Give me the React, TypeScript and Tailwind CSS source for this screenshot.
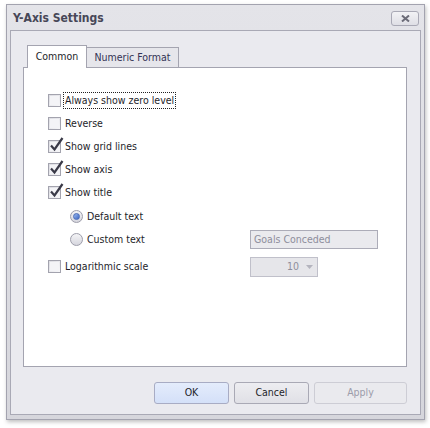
import { useState } from "react";

const font = { fontFamily: "'DejaVu Sans Condensed', 'Liberation Sans', Arial, sans-serif" };

function CheckBox({ checked, label, focused }: { checked?: boolean; label: string; focused?: boolean }) {
  return (
    <div className="flex items-center h-[23px]">
      <div className="relative w-[13px] h-[13px] border border-[#a3a3ae] bg-gradient-to-br from-[#dcdce2] to-[#f7f7f9] shrink-0">
        <div className="absolute inset-[1px] bg-[#f4f4f7]" />
        {checked && (
          <svg className="absolute -left-[1px] -top-[5px]" width="17" height="17" viewBox="0 0 17 17">
            <path d="M3 9.5 L6.5 13.5 L14.5 2" fill="none" stroke="#3a3a48" strokeWidth="2.2" />
          </svg>
        )}
      </div>
      <span
        className={`ml-[3px] px-[1px] text-[10.5px] text-[#1e1e2a] leading-[15px] ${focused ? "outline-1 outline-dotted outline-[#222]" : ""}`}
      >
        {label}
      </span>
    </div>
  );
}

function Radio({ checked, label }: { checked?: boolean; label: string }) {
  return (
    <div className="flex items-center h-[23px]">
      <div className="w-[13px] h-[13px] rounded-full border border-[#9d9daa] bg-gradient-to-b from-[#f4f4f6] to-[#d6d6de] flex items-center justify-center shrink-0">
        {checked && <div className="w-[7px] h-[7px] rounded-full bg-gradient-to-br from-[#9ab8ef] to-[#3e66c2] border border-[#4a6cb8]" />}
      </div>
      <span className="ml-[4px] text-[10.5px] text-[#1e1e2a]">{label}</span>
    </div>
  );
}

export default function App() {
  const [tab] = useState("common");
  void tab;
  return (
    <div className="w-[430px] h-[428px] bg-white pt-[4px] pl-[6px]" style={font}>
      <div className="w-[419px] h-[416px] flex flex-col border border-[#a3a3af] bg-gradient-to-b from-[#e4e4e9] to-[#d6d6dc] shadow-[1px_2px_4px_rgba(0,0,0,0.25)]">
        {/* Title bar */}
        <div className="h-[25px] flex items-center justify-between pl-[6px] pr-[5px]">
          <span className="font-bold text-[12px] text-[#474757]">Y-Axis Settings</span>
          <button
            type="button"
            className="w-[28px] h-[15px] mt-[1px] rounded-[3px] border border-[#a9a9b5] bg-gradient-to-b from-[#f2f2f5] to-[#dfdfe5] flex items-center justify-center"
          >
            <svg width="9" height="7" viewBox="0 0 9 7">
              <path d="M1 0.5 L8 6.5 M8 0.5 L1 6.5" stroke="#6c6c78" strokeWidth="2" />
            </svg>
          </button>
        </div>

        {/* Body */}
        <div className="flex-1 mx-[3px] mb-[4px] border border-[#a9a9b5] bg-[#eaeaef] flex flex-col pl-[12px] pr-[13px] pt-[13px]">
          {/* Tabs */}
          <div className="flex items-end h-[23px] pl-[4px]">
            <div className="h-[23px] w-[60px] border border-b-0 border-[#a4a4b0] bg-white flex items-center justify-center text-[10.5px] text-[#1e1e2a] relative -mb-[1px] z-10">
              Common
            </div>
            <div className="h-[20px] w-[92px] border border-l-0 border-b-0 border-[#a4a4b0] bg-[#e6e6eb] flex items-center justify-center text-[10.5px] text-[#333355]">
              Numeric Format
            </div>
          </div>
          {/* Panel */}
          <div className="h-[300px] border border-[#a4a4b0] bg-white pt-[21px] pl-[24px]">
            <CheckBox label="Always show zero level" focused />
            <CheckBox label="Reverse" />
            <CheckBox label="Show grid lines" checked />
            <CheckBox label="Show axis" checked />
            <CheckBox label="Show title" checked />
            <div className="pl-[22px] pt-[1px] flex items-center justify-between pr-[28px]">
              <Radio label="Default text" checked />
            </div>
            <div className="pl-[22px] flex items-center justify-between pr-[28px]">
              <Radio label="Custom text" />
              <div className="w-[128px] h-[19px] border border-[#acacb8] bg-[#eaeaee] flex items-center px-[3px] text-[10.5px] text-[#8e8e9c]">
                Goals Conceded
              </div>
            </div>
            <div className="flex items-center pt-[4px]">
              <div className="w-[202px]">
                <CheckBox label="Logarithmic scale" />
              </div>
              <div className="w-[68px] h-[20px] border border-[#c0c0ca] bg-[#e6e6ea] flex items-center justify-end pr-[4px] text-[10.5px] text-[#8e8e9c]">
                <span>10</span>
                <svg className="ml-[7px]" width="7" height="4" viewBox="0 0 7 4">
                  <path d="M0 0 L7 0 L3.5 4 Z" fill="#b4b4be" />
                </svg>
              </div>
            </div>
          </div>

          {/* Buttons */}
          <div className="flex justify-end gap-[5px] mt-[15px]">
            <button
              type="button"
              className="w-[75px] h-[22px] rounded-[3px] border border-[#a8acc4] bg-gradient-to-b from-[#e4ecfc] to-[#d4e0f8] text-[10.5px] text-[#1e1e2a]"
            >
              OK
            </button>
            <button
              type="button"
              className="w-[75px] h-[22px] rounded-[3px] border border-[#a9a9b5] bg-gradient-to-b from-[#ededf1] to-[#e0e0e6] text-[10.5px] text-[#1e1e2a]"
            >
              Cancel
            </button>
            <button
              type="button"
              className="w-[93px] h-[22px] rounded-[3px] border border-[#cdcdd5] bg-[#eaeaee] text-[10.5px] text-[#9c9caa]"
            >
              Apply
            </button>
          </div>
        </div>
      </div>
    </div>
  );
}
